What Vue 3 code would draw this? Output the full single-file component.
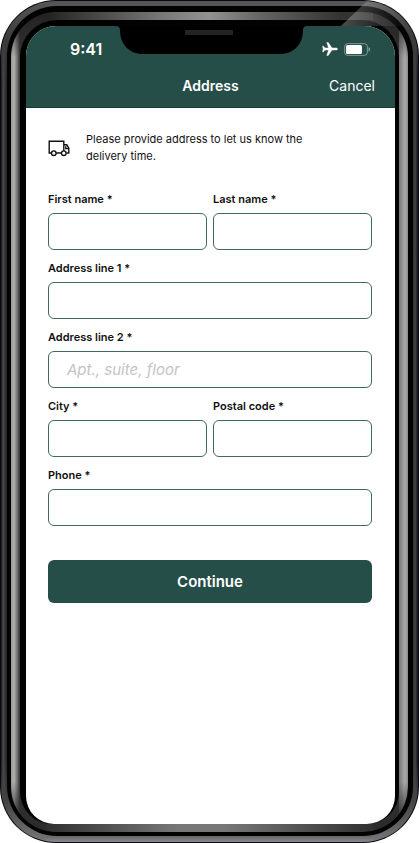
<script setup>
import { reactive } from 'vue'

const fields = [
  { id: 'first', label: 'First name *', half: true, auto: 'given-name' },
  { id: 'last', label: 'Last name *', half: true, auto: 'family-name' },
  { id: 'line1', label: 'Address line 1 *', auto: 'address-line1' },
  { id: 'line2', label: 'Address line 2 *', hint: 'Apt., suite, floor', auto: 'address-line2' },
  { id: 'city', label: 'City *', half: true, auto: 'address-level2' },
  { id: 'postal', label: 'Postal code *', half: true, auto: 'postal-code' },
  { id: 'phone', label: 'Phone *', type: 'tel', auto: 'tel' }
]
const form = reactive({ first: '', last: '', line1: '', line2: '', city: '', postal: '', phone: '' })
</script>

<template>
  <div class="shell">
    <div class="edge">
      <div class="band">
        <div class="rim">
          <div class="bezel">
            <main class="screen">
              <header class="top">
                <div class="status">
                  <span class="time">9:41</span>
                  <span class="icons">
                    <svg width="16" height="14" viewBox="0 0 16 14" aria-hidden="true">
                      <path fill="#fff" stroke="#fff" stroke-width=".4" d="M15.500 7c0-.8-.8-1.100-1.800-1.100H10L6.200.4H4.800l1.700 5.500H3L1.600 4.200H.5L1.200 7 .5 9.800h1.100L3 8.100h3.500L4.800 13.600h1.400L10 8.100h3.700c1 0 1.800-.3 1.800-1.100z" />
                    </svg>
                    <svg width="27" height="13" viewBox="0 0 27 13" aria-hidden="true">
                      <rect x=".6" y=".6" width="22.800" height="11.800" rx="3.200" fill="none" stroke="#fff" stroke-opacity=".4" />
                      <rect x="2" y="2" width="16" height="9" rx="1.600" fill="#fff" />
                      <path d="M24.600 4.300v4.400c1-.4 1.500-1.200 1.500-2.200s-.5-1.800-1.500-2.200z" fill="#fff" fill-opacity=".5" />
                    </svg>
                  </span>
                </div>
                <div class="bar">
                  <h1>Address</h1>
                  <button type="button" class="cancel">Cancel</button>
                </div>
              </header>

              <section class="body">
                <div class="info">
                  <svg width="22" height="17" viewBox="0 0 22 17" fill="none" stroke="#111" stroke-width="1.400" aria-hidden="true">
                    <path d="M3.300 13H1.200V1.200h14.600V11M8.200 13h5M15.800 4.800h3l2 3.400V13h-2.300M20.800 8.600h-3V6.200" />
                    <circle cx="5.800" cy="13.200" r="2.300" />
                    <circle cx="15.800" cy="13.200" r="2.300" fill="#fff" />
                  </svg>
                  <p>Please provide address to let us know the delivery time.</p>
                </div>

                <form @submit.prevent>
                  <div class="fields">
                    <div v-for="f in fields" :key="f.id" class="field" :class="{ half: f.half }">
                      <label :for="f.id">{{ f.label }}</label>
                      <input :id="f.id" v-model="form[f.id]" :type="f.type || 'text'" :placeholder="f.hint" :autocomplete="f.auto" />
                    </div>
                  </div>
                  <button type="submit" class="continue">Continue</button>
                </form>
              </section>
            </main>
          </div>
        </div>
      </div>
    </div>
    <svg class="notch" width="193" height="29" viewBox="0 0 193 29" aria-hidden="true">
      <path d="M0 0h193v1h-1c-2.500 0-4 1.500-4 4 0 14-9 24-23 24H28C14 29 5 19 5 5c0-2.500-1.500-4-4-4H0z" fill="#000" />
      <rect x="70" y="5" width="48" height="5" fill="#242424" />
    </svg>
    <svg class="glare" width="110" height="27" viewBox="0 0 110 27" aria-hidden="true">
      <defs>
        <linearGradient id="shine" x1="0" x2="1" y1="0" y2="0">
          <stop offset="0" stop-color="#fff" stop-opacity=".3" />
          <stop offset=".9" stop-color="#fff" stop-opacity="0" />
        </linearGradient>
      </defs>
      <path d="M58 1C79 3 94 12 104 26H32z" fill="url(#shine)" />
    </svg>
  </div>
</template>

<style>
body {
  background: #fff;
}
</style>

<style scoped>
* {
  box-sizing: border-box;
}
.shell {
  position: relative;
  display: flex;
  min-height: 100vh;
  padding: 1px;
  border-radius: 56px;
  background: #0b0918;
  font-family: Inter, "Liberation Sans", sans-serif;
}
.edge,
.band,
.rim,
.bezel,
.screen {
  flex: 1;
  min-width: 0;
}
.edge {
  display: flex;
  padding: 5px 5px 6px 6px;
  border-radius: 55px;
  background:
    linear-gradient(#555, #555) top / calc(100% - 90px) 5px no-repeat,
    linear-gradient(#666, #8a8a8a) bottom / calc(100% - 90px) 6px no-repeat,
    linear-gradient(#555, #3b3b3b 40px, transparent 80px, transparent calc(100% - 80px), #444 calc(100% - 40px), #777),
    linear-gradient(90deg, #111, #4a4a4a 2px, #222 6px, #222 calc(100% - 6px), #444 calc(100% - 3px), #111);
}
.band {
  display: flex;
  padding: 6px 5px 4px 4px;
  border-radius: 50px;
  background: #030303;
}
.rim {
  display: flex;
  padding: 8px 9px 8px 9px;
  border-radius: 45px;
  background:
    linear-gradient(90deg, #222, #777 35%, #929292 50%, #666 65%, #333 90%, #333) center top / calc(100% - 70px) 8px no-repeat,
    linear-gradient(90deg, #303030, #777 40%, #777 55%, #303030) center bottom / calc(100% - 70px) 8px no-repeat,
    linear-gradient(#222, transparent 45px, transparent calc(100% - 50px), #2c2c2c calc(100% - 10px)),
    linear-gradient(90deg, #999, #b0b0b0 3px, #777 6px, #333 9px, #333 calc(100% - 9px), #777 calc(100% - 9px), #aaa calc(100% - 3px), #888);
}
.bezel {
  display: flex;
  padding: 6px 4px 0 6px;
  border-radius: 37px 37px 32px 32px;
  background: #020202;
}
.screen {
  overflow: hidden;
  border-radius: 30px 30px 28px 28px;
  background: #fff;
  color: #111;
}
.top {
  padding: 12px 20px 10px 44px;
  border-bottom: 1px solid #113c35;
  background: #264e48;
  color: #fff;
}
.status {
  display: flex;
  align-items: center;
  justify-content: space-between;
  height: 22px;
}
.time {
  font-size: 16px;
  font-weight: 600;
}
.icons {
  display: flex;
  align-items: center;
  gap: 6px;
  padding-right: 4px;
}
.bar {
  display: grid;
  grid-template-columns: 1fr auto 1fr;
  align-items: center;
  height: 37px;
  margin: 0 0 0 -24px;
  padding-top: 15px;
}
h1 {
  grid-column: 2;
  margin: 0;
  font-size: 14px;
  font-weight: 600;
  line-height: 20px;
}
.cancel {
  justify-self: end;
  padding: 0;
  border: 0;
  background: none;
  color: #fff;
  font: 14px/20px Inter, "Liberation Sans", sans-serif;
}
.body {
  padding: 23px 23px 24px 22px;
}
.info {
  display: flex;
  align-items: center;
  gap: 16px;
  margin-bottom: 26px;
}
.info svg {
  flex: none;
}
.info p {
  max-width: 240px;
  margin: 0;
  font-size: 11px;
  line-height: 17px;
}
.fields {
  display: grid;
  grid-template-columns: 1fr 1fr;
  gap: 10px 6px;
}
.field {
  display: flex;
  flex-direction: column;
  grid-column: span 2;
  gap: 6px;
  min-width: 0;
}
.field.half {
  grid-column: span 1;
}
label {
  font-size: 11px;
  font-weight: 600;
  line-height: 16px;
}
input {
  width: 100%;
  height: 37px;
  padding: 0 18px;
  border: 1px solid #42695f;
  border-radius: 6px;
  background: #fff;
  color: #111;
  font: 15px Inter, "Liberation Sans", sans-serif;
}
input::placeholder {
  color: #c4c4c4;
  font-style: italic;
  opacity: 1;
}
.continue {
  width: 100%;
  height: 43px;
  margin-top: 34px;
  border: 0;
  border-radius: 6px;
  background: #264e48;
  color: #fff;
  font: 600 15px Inter, "Liberation Sans", sans-serif;
}
.notch {
  position: absolute;
  top: 25px;
  left: 50%;
  margin-left: -95px;
}
.glare {
  position: absolute;
  top: 0;
  right: 0;
}
</style>
